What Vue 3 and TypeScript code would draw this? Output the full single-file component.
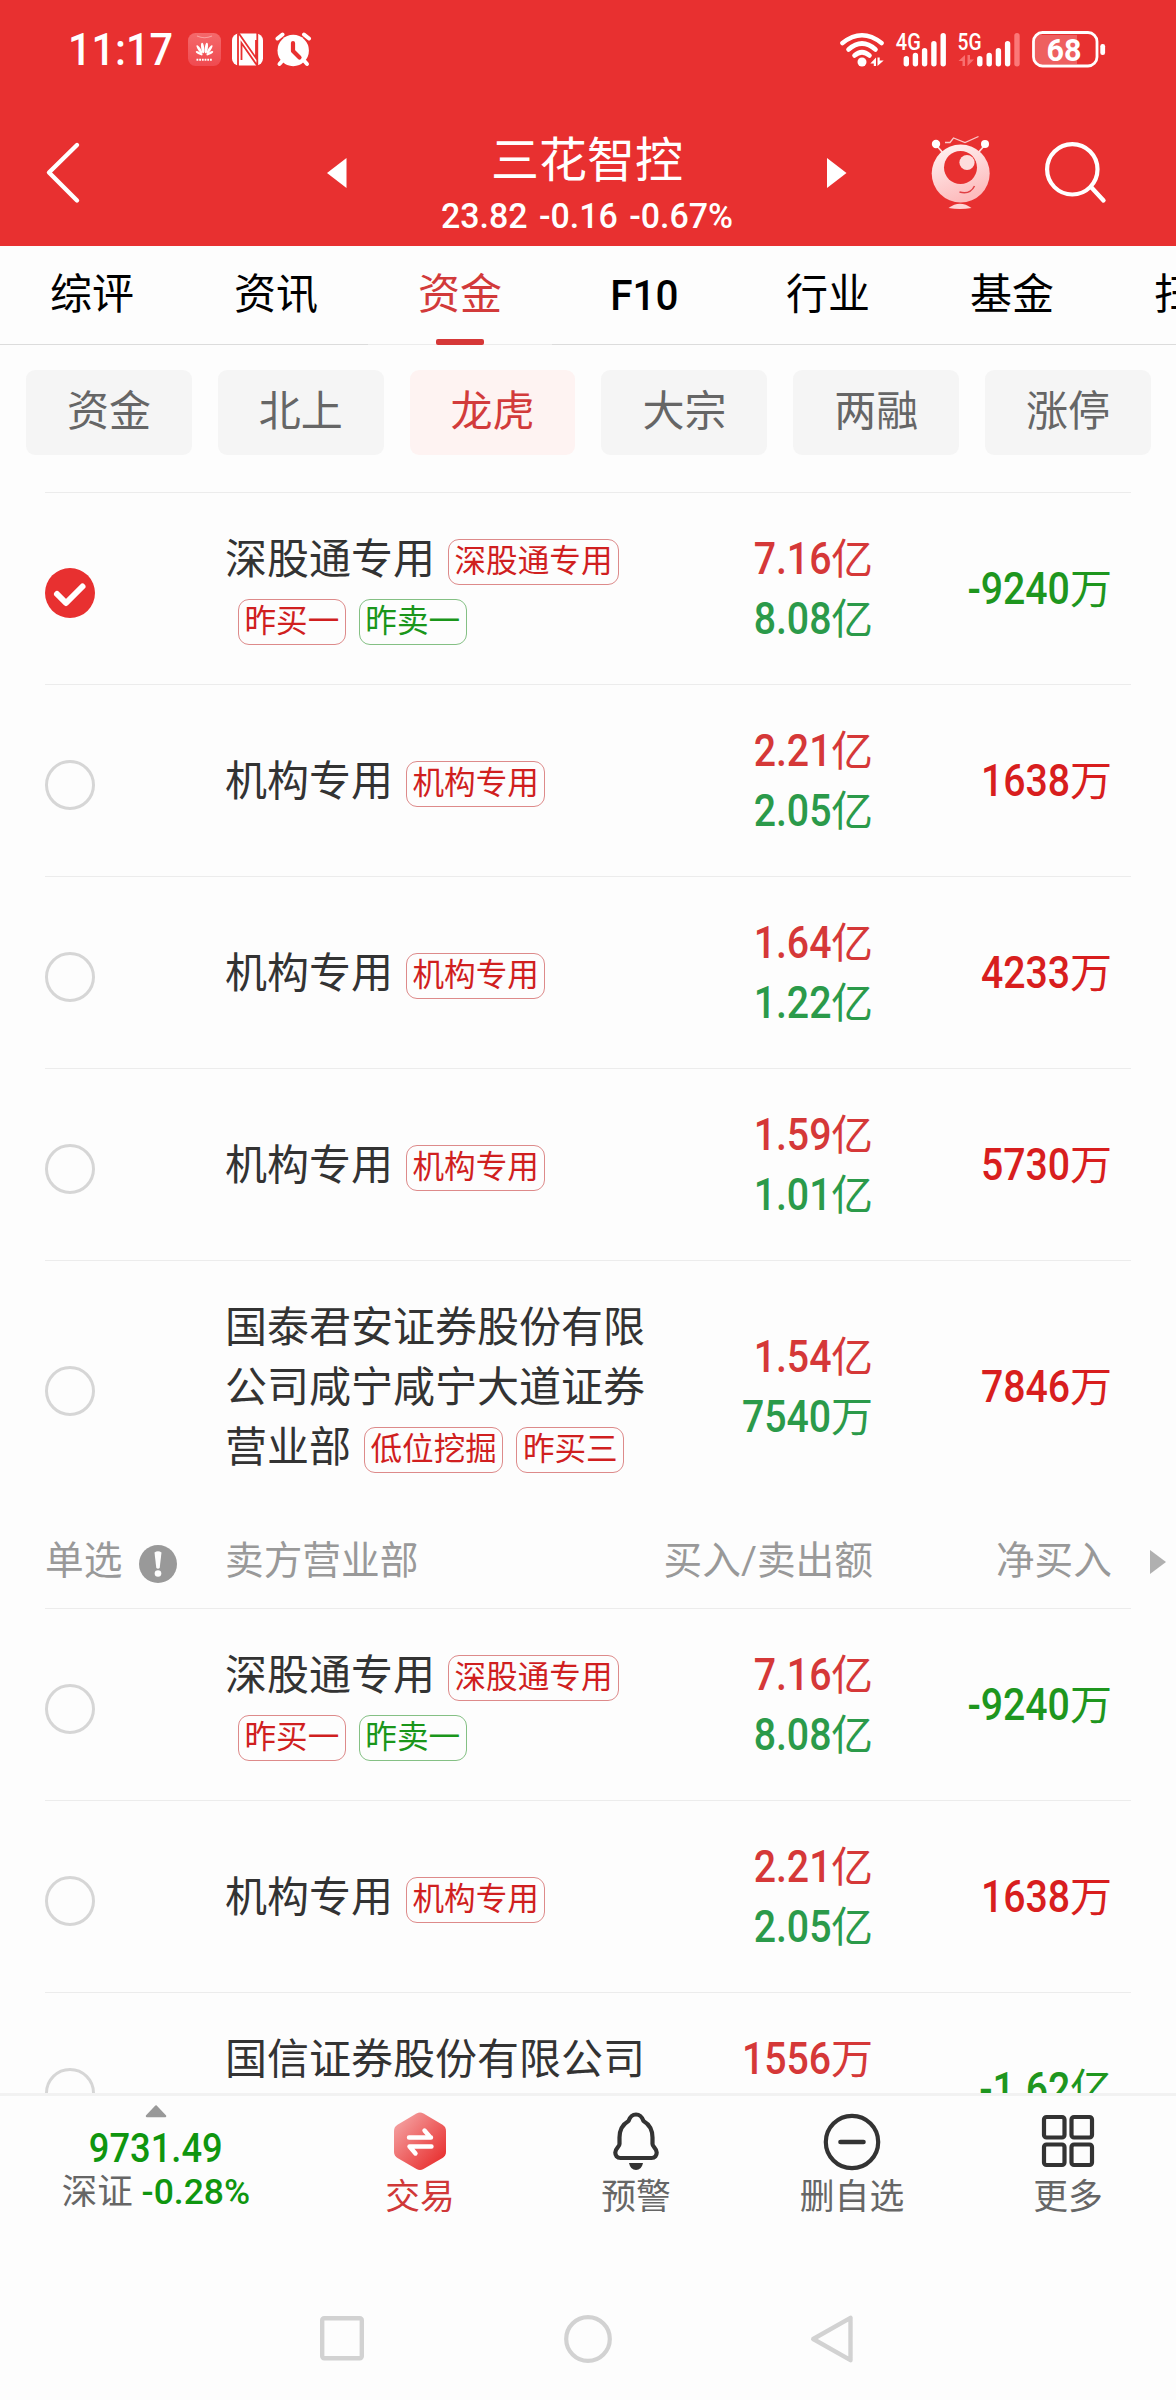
<script setup lang="ts">
type Tone = 'red' | 'green'

interface Tag {
  text: string
  tone: Tone
}

interface Amount {
  num: string
  unit: string
}

interface Seat {
  name: string
  tags: Tag[]
  buy: Amount
  sell: Amount
  net: Amount
  netTone: Tone
  checked?: boolean
}

const tabs = ['综评', '资讯', '资金', 'F10', '行业', '基金', '扫雷']
const activeTab = '资金'

const chips = ['资金', '北上', '龙虎', '大宗', '两融', '涨停']
const activeChip = '龙虎'

const amount = (num: string, unit: string): Amount => ({ num, unit })

const northbound = (checked: boolean): Seat => ({
  name: '深股通专用',
  tags: [
    { text: '深股通专用', tone: 'red' },
    { text: '昨买一', tone: 'red' },
    { text: '昨卖一', tone: 'green' },
  ],
  buy: amount('7.16', '亿'),
  sell: amount('8.08', '亿'),
  net: amount('-9240', '万'),
  netTone: 'green',
  checked,
})

const institution = (buy: string, sell: string, net: string): Seat => ({
  name: '机构专用',
  tags: [{ text: '机构专用', tone: 'red' }],
  buy: amount(buy, '亿'),
  sell: amount(sell, '亿'),
  net: amount(net, '万'),
  netTone: 'red',
})

const buyers: Seat[] = [
  northbound(true),
  institution('2.21', '2.05', '1638'),
  institution('1.64', '1.22', '4233'),
  institution('1.59', '1.01', '5730'),
  {
    name: '国泰君安证券股份有限公司咸宁咸宁大道证券营业部',
    tags: [
      { text: '低位挖掘', tone: 'red' },
      { text: '昨买三', tone: 'red' },
    ],
    buy: amount('1.54', '亿'),
    sell: amount('7540', '万'),
    net: amount('7846', '万'),
    netTone: 'red',
  },
]

const sellers: Seat[] = [
  northbound(false),
  institution('2.21', '2.05', '1638'),
  {
    name: '国信证券股份有限公司浙江分公司',
    tags: [],
    buy: amount('1556', '万'),
    sell: amount('1.77', '亿'),
    net: amount('-1.62', '亿'),
    netTone: 'green',
  },
]

const groups = [
  { title: '', seats: buyers },
  { title: '卖方营业部', seats: sellers },
]
</script>

<template>
  <div class="screen">
    <header class="top">
      <div class="status">
        <span class="clock num">11:17</span>
        <svg class="left-icons" width="124" height="36" viewBox="188 32 124 36">
          <defs>
            <linearGradient id="hw" x1="0" y1="0" x2="0" y2="1">
              <stop offset="0" stop-color="#f4696b" />
              <stop offset="1" stop-color="#f04a50" />
            </linearGradient>
          </defs>
          <rect x="188" y="33" width="33" height="33" rx="7.500" fill="url(#hw)" />
          <path d="M197 36q7.500 3.500 15 0" fill="none" stroke="#f9a0a0" stroke-width="1.200" />
          <g fill="#fff">
            <ellipse cx="202.700" cy="48" rx="1.500" ry="5.300" transform="rotate(-8 202.700 48)" />
            <ellipse cx="206.300" cy="48" rx="1.500" ry="5.300" transform="rotate(8 206.300 48)" />
            <ellipse cx="199.500" cy="49.500" rx="1.400" ry="5" transform="rotate(-33 199.500 49.500)" />
            <ellipse cx="209.500" cy="49.500" rx="1.400" ry="5" transform="rotate(33 209.500 49.500)" />
            <ellipse cx="199.200" cy="53.300" rx="1.200" ry="3.800" transform="rotate(-62 199.200 53.300)" />
            <ellipse cx="209.800" cy="53.300" rx="1.200" ry="3.800" transform="rotate(62 209.800 53.300)" />
          </g>
          <path d="M196.500 59.700h16" stroke="#fff" stroke-width="2" stroke-dasharray="1.800 .9" />
          <rect x="232" y="33.500" width="31" height="32" rx="7" fill="#fff" />
          <path d="M238 66V33.500M238.500 33l17.500 25V40M257.500 66L241.500 43V60M257.300 66V33" fill="none" stroke="#e83030" stroke-width="1.800" />
          <circle cx="293.200" cy="50.500" r="15.700" fill="#fff" />
          <path d="M277.500 38.500l5-4M309 38.500l-5-4" stroke="#fff" stroke-width="4" stroke-linecap="round" />
          <path d="M283 60l-3.500 4M303.500 60l3.500 4" stroke="#fff" stroke-width="4" stroke-linecap="round" />
          <path d="M293 43v8l6.500 6.500" fill="none" stroke="#e83030" stroke-width="4.200" stroke-linecap="round" stroke-linejoin="round" />
        </svg>
        <svg class="right-icons" width="270" height="40" viewBox="838 30 270 40">
          <g fill="none" stroke="#fff" stroke-width="4.600" stroke-linecap="round">
            <path d="M842.500 43q19.500-15.500 39 0" />
            <path d="M848.500 49.500q13.500-12 27 0" />
            <path d="M854.500 55.500q7.500-6.500 15 0" />
          </g>
          <circle cx="862" cy="62" r="4.500" fill="#fff" />
          <path d="M876 57.500v8.500h-2.200v-2.500h-3.500zM877.500 66v-8.500h2.200v3h4z" fill="#fff" />
          <text x="895.800" y="49.800" class="net" textLength="25" lengthAdjust="spacingAndGlyphs">4G</text>
          <g stroke="#fff" stroke-width="5.400" stroke-linecap="round">
            <path d="M906.300 58.700v5M915.400 55.500v8.200M924.600 50.700v13M933.900 43.700v20M943.200 35.700v28" />
            <path d="M979.800 58.700v5M989.200 55.500v8.200M998.400 50.700v13M1007.600 43.700v20" />
            <path d="M1017 35.700v28" stroke="#fb7878" />
          </g>
          <text x="957.600" y="49.800" class="net" textLength="24" lengthAdjust="spacingAndGlyphs">5G</text>
          <path d="M965 55v11h-2.500v-5h-4zM967.500 66v-11h2.500v4.500h4z" fill="#f87070" />
          <path d="M1040 35h37v29h-37q-5 0-5-5v-19q0-5 5-5z" fill="#ee6060" />
          <rect x="1033.500" y="32.500" width="63.500" height="33.500" rx="9" fill="none" stroke="#fff" stroke-width="2.800" />
          <rect x="1100.300" y="44" width="4.800" height="11" rx="2.200" fill="#fff" />
          <text x="1046.500" y="61" class="bat" textLength="35" lengthAdjust="spacingAndGlyphs">68</text>
        </svg>
      </div>
      <div class="titlebar">
        <svg class="back" width="40" height="66" viewBox="44 140 40 66">
          <path d="M77 145L49 172.500l28 28" fill="none" stroke="#fff" stroke-width="4.400" stroke-linecap="round" stroke-linejoin="round" />
        </svg>
        <svg class="prev" width="21" height="30" viewBox="0 0 21 30"><path d="M20.500 0v30L1 15z" fill="#fff" /></svg>
        <div class="stock">
          <h1>三花智控</h1>
          <p>23.82 -0.16 -0.67%</p>
        </div>
        <svg class="next" width="21" height="30" viewBox="0 0 21 30"><path d="M0 0v30L19.500 15z" fill="#fff" /></svg>
        <svg class="robot" width="64" height="78" viewBox="929 134 64 78">
          <defs>
            <linearGradient id="rb" x1="0" y1="0" x2=".4" y2="1">
              <stop offset="0" stop-color="#fff6f6" />
              <stop offset="1" stop-color="#fdbcbd" />
            </linearGradient>
          </defs>
          <path d="M937 146l6 7M984 146l-6 7" stroke="#fde0e0" stroke-width="1.800" />
          <circle cx="936" cy="144" r="4.200" fill="#fff" />
          <circle cx="985" cy="144" r="4" fill="#fff" />
          <path d="M945 142.500h5l3.500-4.500 11.500 4.500 13.500-6" fill="none" stroke="#fbc8c8" stroke-width="1.300" />
          <circle cx="960.700" cy="173.500" r="29" fill="url(#rb)" />
          <circle cx="960.500" cy="167.500" r="16.500" fill="#e83030" />
          <circle cx="967" cy="162.500" r="7.600" fill="#fddcdc" />
          <path d="M959.500 192q10.500 3 15-6" fill="none" stroke="#e04044" stroke-width="1.500" />
          <path d="M948.500 208q11.500-8.500 23 0q-11.500 2-23 0z" fill="#ffd5d5" />
        </svg>
        <svg class="search" width="66" height="66" viewBox="1042 139 66 66">
          <circle cx="1072.300" cy="169.300" r="25.200" fill="none" stroke="#fff" stroke-width="4.200" />
          <path d="M1091.500 187.500l12 13" stroke="#fff" stroke-width="4.400" stroke-linecap="round" />
        </svg>
      </div>
    </header>

    <nav class="tabs">
      <div v-for="tab in tabs" :key="tab" class="tab" :class="{ on: tab === activeTab, latin: tab === 'F10' }">
        <span>{{ tab }}</span>
      </div>
    </nav>

    <main class="content">
      <div class="chips">
        <div v-for="chip in chips" :key="chip" class="chip" :class="{ on: chip === activeChip }">{{ chip }}</div>
      </div>

      <section v-for="(group, g) in groups" :key="g" class="group">
        <div v-if="group.title" class="thead">
          <span class="pick">
            单选
            <svg width="38" height="38" viewBox="0 0 38 38">
              <circle cx="19" cy="19" r="19" fill="#999" />
              <path d="M15.500 7.500q3.500-2.500 7 0l-1.800 15.500q-1.700 1.500-3.400 0z" fill="#fdfdfd" />
              <circle cx="19" cy="28.500" r="3.300" fill="#fdfdfd" />
            </svg>
          </span>
          <span class="name">{{ group.title }}</span>
          <span class="pair">买入/卖出额</span>
          <span class="net-value">净买入</span>
          <svg class="more-cols" width="16" height="24" viewBox="0 0 16 24"><path d="M0 0v24L16 12z" fill="#b0b0b0" /></svg>
        </div>
        <div v-for="(seat, i) in group.seats" :key="i" class="row">
          <div class="pick">
            <svg width="50" height="50" viewBox="0 0 50 50">
              <template v-if="seat.checked">
                <circle cx="25" cy="25" r="25" fill="#e83030" />
                <path d="M12 26l9 9 16.500-16.500" fill="none" stroke="#fff" stroke-width="6" stroke-linecap="round" stroke-linejoin="round" />
              </template>
              <circle v-else cx="25" cy="25" r="23.500" fill="none" stroke="#d6d6d6" stroke-width="3" />
            </svg>
          </div>
          <div class="name">{{ seat.name }}<template v-for="tag in seat.tags" :key="tag.text"><wbr /><span class="tag" :class="tag.tone">{{ tag.text }}</span></template></div>
          <div class="pair">
            <div class="buy"><span class="num">{{ seat.buy.num }}</span>{{ seat.buy.unit }}</div>
            <div class="sell"><span class="num">{{ seat.sell.num }}</span>{{ seat.sell.unit }}</div>
          </div>
          <div class="net-value" :class="seat.netTone"><span class="num">{{ seat.net.num }}</span>{{ seat.net.unit }}</div>
        </div>
      </section>
    </main>

    <footer class="dock">
      <div class="index">
        <svg width="22" height="13" viewBox="0 0 22 13"><path d="M11 1.500L20 11H2z" fill="#999" stroke="#999" stroke-width="2.500" stroke-linejoin="round" /></svg>
        <div class="points"><span class="num">9731.49</span></div>
        <div class="change">深证 <span class="num">-0.28%</span></div>
      </div>
      <div class="action trade">
        <svg width="60" height="60" viewBox="0 0 60 60">
          <defs>
            <linearGradient id="hex" x1=".1" y1=".1" x2=".9" y2=".9">
              <stop offset="0" stop-color="#f4a0a0" />
              <stop offset=".5" stop-color="#ee6666" />
              <stop offset="1" stop-color="#e83030" />
            </linearGradient>
          </defs>
          <path d="M26.500 2.500q3.500-2 7 0l19 11.200q3.500 2.100 3.500 6.100v21q0 4-3.500 6.100l-19 11.200q-3.500 2-7 0l-19-11.200Q4 44.800 4 40.800v-21q0-4 3.500-6.100z" fill="url(#hex)" />
          <path d="M19 26.500h22M34.500 19.500l6 7M41.500 35.500h-22M25.500 42.500l-6-7" fill="none" stroke="#fff" stroke-width="4.400" stroke-linecap="round" stroke-linejoin="round" />
        </svg>
        <span>交易</span>
      </div>
      <div class="action">
        <svg width="60" height="60" viewBox="0 0 60 60">
          <path d="M30 3.500c-4.500 0-6 2.500-7.500 6.500-6 3.500-9 9.500-9 16.500v6.500c0 3-4.200 4-4.200 8.500 0 3 1.700 5.500 5.200 5.500h31c3.500 0 5.200-2.500 5.200-5.500 0-4.500-4.200-5.500-4.200-8.500v-6.500c0-7-3-13-9-16.500-1.500-4-3-6.500-7.500-6.500z" fill="none" stroke="#333" stroke-width="4.200" stroke-linejoin="round" />
          <path d="M23 52h14q-1.500 7-7 7t-7-7z" fill="#333" />
        </svg>
        <span>预警</span>
      </div>
      <div class="action">
        <svg width="60" height="60" viewBox="0 0 60 60">
          <circle cx="30" cy="31" r="26.200" fill="none" stroke="#333" stroke-width="4.200" />
          <path d="M18.500 31h23" stroke="#333" stroke-width="4.600" stroke-linecap="round" />
        </svg>
        <span>删自选</span>
      </div>
      <div class="action">
        <svg width="60" height="60" viewBox="0 0 60 60">
          <g fill="none" stroke="#333" stroke-width="4.200">
            <rect x="6" y="6" width="20.500" height="20.500" rx="2.500" />
            <rect x="33.500" y="6" width="20.500" height="20.500" rx="2.500" />
            <rect x="6" y="33.500" width="20.500" height="20.500" rx="2.500" />
            <rect x="33.500" y="33.500" width="20.500" height="20.500" rx="2.500" />
          </g>
        </svg>
        <span>更多</span>
      </div>
    </footer>

    <div class="sysnav">
      <svg width="48" height="50" viewBox="0 0 48 50"><rect x="4.200" y="4.200" width="39.600" height="40" rx="2" fill="none" stroke="#d2d2d2" stroke-width="4.400" /></svg>
      <svg width="50" height="50" viewBox="0 0 50 50"><circle cx="25" cy="25" r="21.800" fill="none" stroke="#d2d2d2" stroke-width="4.200" /></svg>
      <svg width="44" height="50" viewBox="0 0 44 50"><path d="M40.500 3.800v42.400L3.200 25z" fill="none" stroke="#d2d2d2" stroke-width="4.400" stroke-linejoin="round" /></svg>
    </div>
  </div>
</template>

<style>
body {
  margin: 0;
  background: #fdfdfd;
}
</style>

<style scoped>
.screen {
  width: 1176px;
  height: 2400px;
  overflow: hidden;
  display: flex;
  flex-direction: column;
  background: #fdfdfd;
  color: #333;
  font-family: Roboto, 'Noto Sans CJK SC', sans-serif;
  font-size: 42px;
  line-height: 60px;
}

svg {
  display: block;
  flex: none;
}

.num {
  display: inline-block;
  font-weight: 500;
  white-space: nowrap;
}

.top {
  flex: none;
  height: 246px;
  background: #e83030;
  color: #fff;
}

.status {
  display: flex;
  height: 100px;
  padding: 0 68px;
}

.clock {
  width: 120px;
  margin-top: 20px;
  font-size: 45px;
  transform: scaleX(0.92);
  transform-origin: left;
}

.left-icons {
  margin-top: 32px;
}

.right-icons {
  margin: 30px 0 0 auto;
}

.net {
  font: 500 23px Roboto, sans-serif;
  fill: #fff;
}

.bat {
  font: 700 32px Roboto, sans-serif;
  fill: #fff;
}

.titlebar {
  display: flex;
  height: 146px;
  padding-left: 44px;
}

.back {
  margin-top: 40px;
}

.prev {
  margin: 58px 0 0 242px;
}

.stock {
  width: 480px;
  margin-top: 27px;
  text-align: center;
}

.stock h1 {
  margin: 0;
  font-size: 48px;
  line-height: 68px;
  font-weight: 400;
}

.stock p {
  margin: 0;
  font-size: 35px;
  font-weight: 500;
  line-height: 44px;
  word-spacing: 3px;
  transform: scaleX(0.97);
}

.next {
  margin: 58px 0 0;
}

.robot {
  margin: 34px 0 0 81px;
}

.search {
  margin: 39px 0 0 49px;
}

.tabs {
  flex: none;
  display: flex;
  height: 99px;
  overflow: hidden;
  color: #000;
}

.tab {
  flex: none;
  display: flex;
  flex-direction: column;
  align-items: center;
  justify-content: space-between;
  width: 184px;
  box-sizing: border-box;
  padding-top: 19px;
  border-bottom: 1px solid #dcdcdc;
}

.tab.latin {
  font-size: 43px;
  font-weight: 500;
}

.tab.latin span {
  transform: scaleX(0.94);
}

.tab.on {
  color: #d23a3a;
  border-bottom-color: #ececec;
}

.tab.on::after {
  content: '';
  width: 48px;
  height: 6px;
  margin-bottom: -1px;
  border-radius: 2px;
  background: #d63838;
}

.content {
  flex: none;
  height: 1748px;
  overflow: hidden;
}

.chips {
  display: flex;
  gap: 26px;
  padding: 25px 25px 37px 26px;
}

.chip {
  flex: 1;
  height: 85px;
  border-radius: 9px;
  background: #f5f5f5;
  color: #666;
  line-height: 84px;
  text-align: center;
}

.chip.on {
  background: #fef3f2;
  color: #d23b3b;
}

.row {
  display: flex;
  align-items: center;
  margin: 0 45px;
  padding: 37px 0 34px;
  border-top: 1px solid #ececec;
}

.pick {
  flex: none;
  width: 180px;
}

.row .pick svg {
  margin-top: 6px;
}

.name {
  flex: none;
  width: 422px;
}

.pair {
  flex: none;
  width: 226px;
  text-align: right;
}

.net-value {
  flex: none;
  width: 239px;
  text-align: right;
}

.row .num {
  font-size: 43.600px;
  transform: scaleX(0.9);
  transform-origin: right;
}

.buy {
  color: #d53838;
}

.sell {
  color: #2b9a4a;
}

.net-value.red {
  color: #d81e1e;
}

.net-value.green {
  color: #1e961e;
}

.tag {
  display: inline-block;
  height: 44px;
  margin-left: 13px;
  padding: 0 5.500px;
  border: 1px solid #dd8a8a;
  border-radius: 11px;
  color: #d01f1f;
  font-size: 31.600px;
  line-height: 43px;
  vertical-align: 2px;
}

.tag.green {
  border-color: #84c084;
  color: #1a961a;
}

.thead {
  display: flex;
  align-items: center;
  height: 94px;
  padding: 2px 0 0 45px;
  color: #999;
  font-size: 38.700px;
}

.thead .pick {
  display: flex;
  align-items: center;
  gap: 17px;
}

.thead .pick svg {
  margin-top: 6px;
}

.more-cols {
  margin: 2px 0 0 38px;
}

.dock {
  flex: none;
  display: flex;
  height: 187px;
  box-sizing: border-box;
  border-top: 3px solid #f2f2f2;
  color: #666;
  font-size: 34.800px;
}

.index {
  display: flex;
  flex-direction: column;
  align-items: center;
  width: 312px;
  padding-top: 9px;
  line-height: 42px;
}

.index .num {
  color: #0f960f;
}

.points {
  margin-top: 10px;
}

.points .num {
  font-size: 40px;
  transform: scaleX(0.907);
}

.change {
  font-size: 35.500px;
}

.action {
  display: flex;
  flex-direction: column;
  align-items: center;
  width: 216px;
  padding-top: 15px;
}

.action span {
  margin-top: -4px;
}

.trade span {
  color: #d03838;
}

.sysnav {
  display: flex;
  gap: 197px;
  padding: 34px 0 0 318px;
}
</style>
